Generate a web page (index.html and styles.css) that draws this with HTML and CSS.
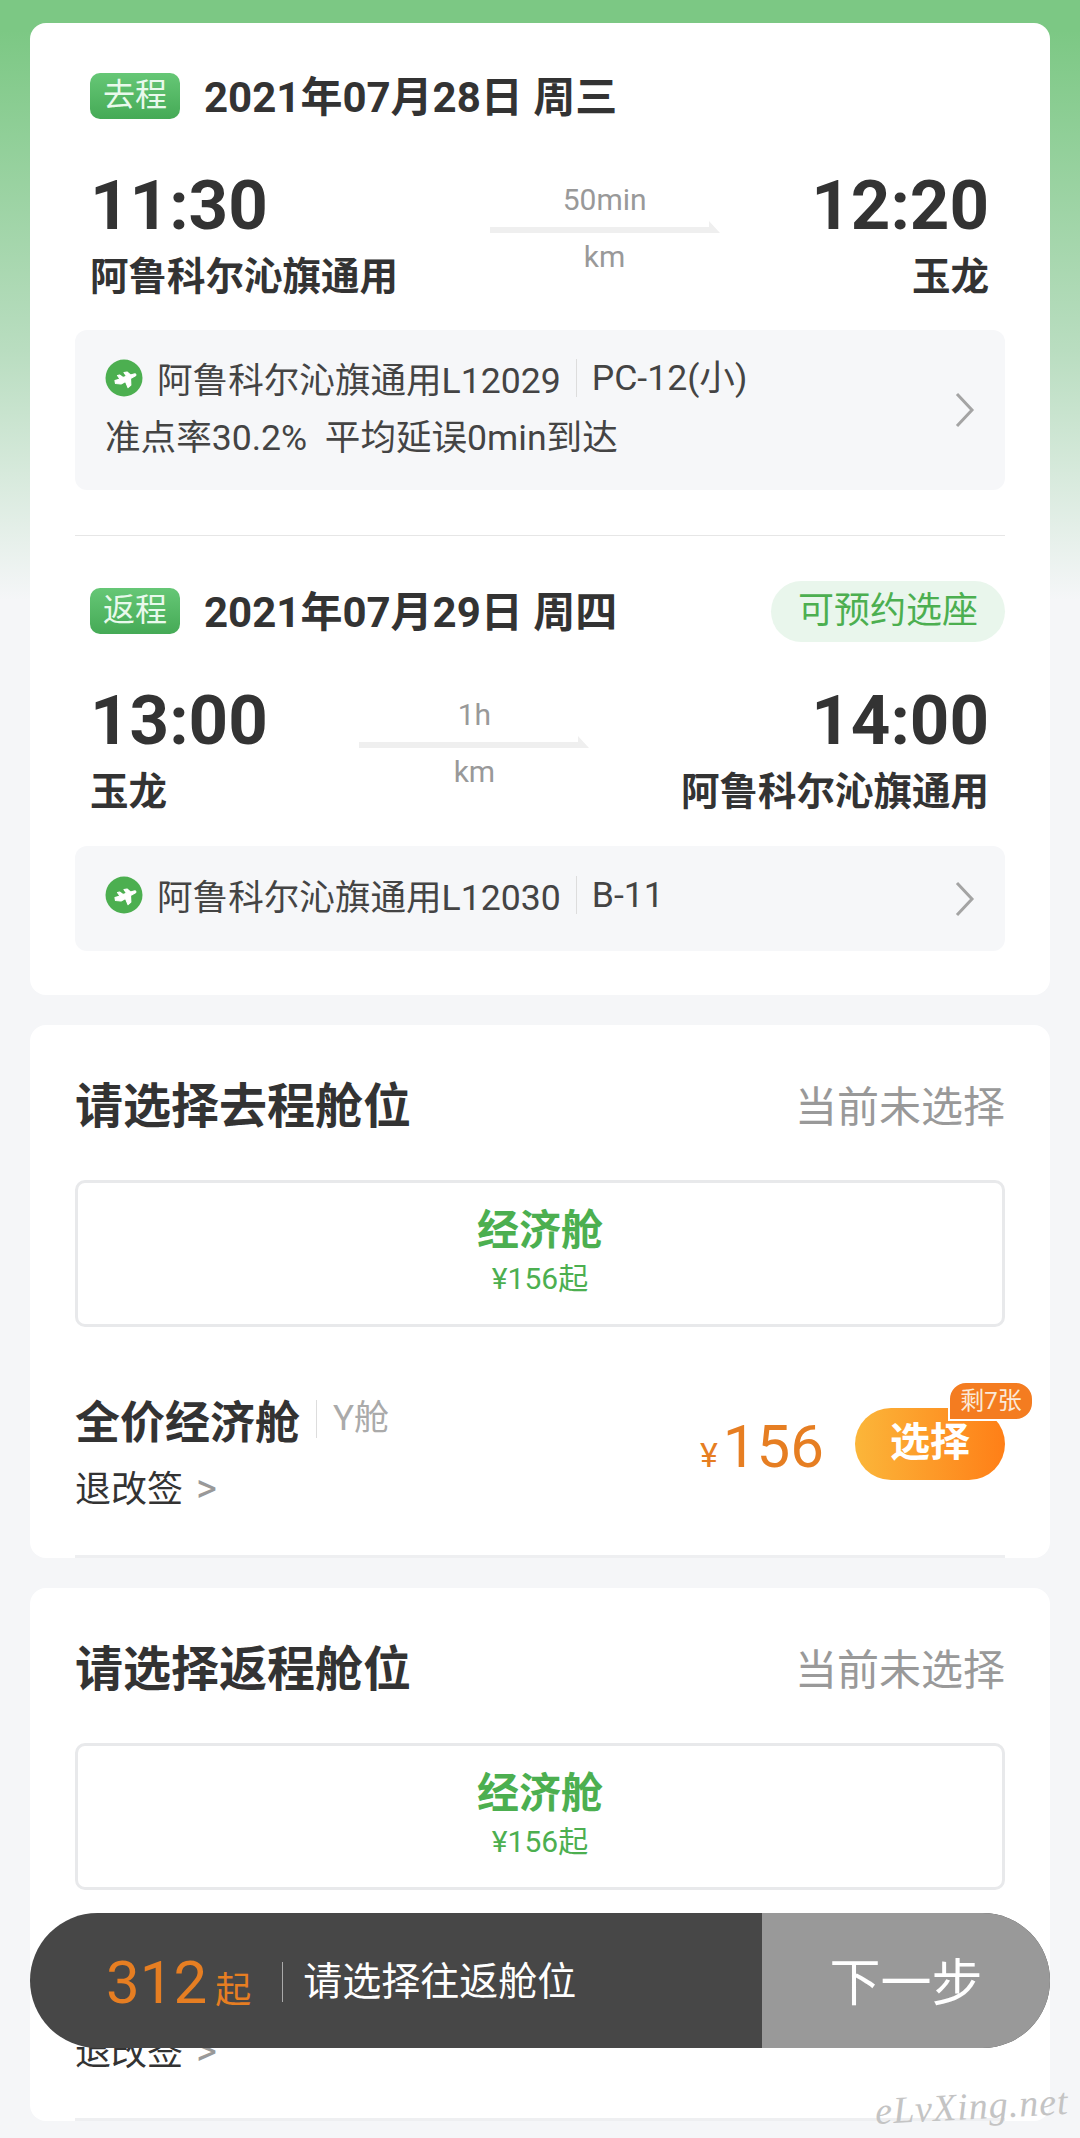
FILE: index.html
```html
<!DOCTYPE html>
<html lang="zh-CN">
<head>
  <meta charset="UTF-8" />
  <meta name="viewport" content="width=device-width, initial-scale=1.0"/>
  <title>选择舱位</title>
  <link rel="stylesheet" href="styles.css">
</head>
<body>
  <div class="page">
    <div class="card trip-card">
      <div class="trip-head">
        <span class="tag">去程</span>
        <span class="trip-date">2021年07月28日 周三</span>
      </div>
      <div class="trip-times">
        <div class="stop">
          <div class="time">11:30</div>
          <div class="station">阿鲁科尔沁旗通用</div>
        </div>
        <div class="route">
          <div class="route-text">50min</div>
          <svg class="route-arrow" width="230" height="12" viewBox="0 0 230 12"><polygon points="0,6 219,6 219,0 230,12 0,12" fill="#efefef"/></svg>
          <div class="route-text">km</div>
        </div>
        <div class="stop stop-right">
          <div class="time">12:20</div>
          <div class="station">玉龙</div>
        </div>
      </div>
      <div class="flight-box">
        <div class="flight-info">
          <div class="flight-line">
            <svg class="plane" width="38" height="38" viewBox="0 0 38 38"><circle cx="19" cy="19" r="18.500" fill="#4caf50"/><path d="M10 21.500L15 20 12.500 16.500 14.500 16 18 18.500 21.500 17.200 19 13.500 22 13 25.500 16 29 15C31 14.500 31.500 16 30 17L25.500 19.500 25.800 26 23 28.500 20.500 22.500 16 25 10.500 24.500z" fill="#fff" stroke="#fff" stroke-width="1.200" stroke-linejoin="round"/></svg>
            <span class="airline">阿鲁科尔沁旗通用L12029</span>
            <span class="plane-type">PC-12(小)</span>
          </div>
          <div class="flight-stat">准点率30.2%&nbsp; 平均延误0min到达</div>
        </div>
        <svg class="chevron" width="20" height="36" viewBox="0 0 20 36"><path d="M2 2l15 16L2 34" fill="none" stroke="#a4a4a4" stroke-width="3"/></svg>
      </div>

      <div class="trip-divider"></div>

      <div class="trip-head return-head">
        <span class="tag">返程</span>
        <span class="trip-date">2021年07月29日 周四</span>
        <span class="seat-pill">可预约选座</span>
      </div>
      <div class="trip-times return-times">
        <div class="stop">
          <div class="time">13:00</div>
          <div class="station">玉龙</div>
        </div>
        <div class="route">
          <div class="route-text">1h</div>
          <svg class="route-arrow" width="230" height="12" viewBox="0 0 230 12"><polygon points="0,6 219,6 219,0 230,12 0,12" fill="#efefef"/></svg>
          <div class="route-text">km</div>
        </div>
        <div class="stop stop-right">
          <div class="time">14:00</div>
          <div class="station">阿鲁科尔沁旗通用</div>
        </div>
      </div>
      <div class="flight-box flight-box-short">
        <div class="flight-info">
          <div class="flight-line">
            <svg class="plane" width="38" height="38" viewBox="0 0 38 38"><circle cx="19" cy="19" r="18.500" fill="#4caf50"/><path d="M10 21.500L15 20 12.500 16.500 14.500 16 18 18.500 21.500 17.200 19 13.500 22 13 25.500 16 29 15C31 14.500 31.500 16 30 17L25.500 19.500 25.800 26 23 28.500 20.500 22.500 16 25 10.500 24.500z" fill="#fff" stroke="#fff" stroke-width="1.200" stroke-linejoin="round"/></svg>
            <span class="airline">阿鲁科尔沁旗通用L12030</span>
            <span class="plane-type">B-11</span>
          </div>
        </div>
        <svg class="chevron" width="20" height="36" viewBox="0 0 20 36"><path d="M2 2l15 16L2 34" fill="none" stroke="#a4a4a4" stroke-width="3"/></svg>
      </div>
    </div>

    <div class="card cabin-card">
      <div class="cabin-head">
        <span class="cabin-title">请选择去程舱位</span>
        <span class="cabin-state">当前未选择</span>
      </div>
      <div class="cabin-box">
        <div class="cabin-name">经济舱</div>
        <div class="cabin-from">¥156起</div>
      </div>
      <div class="fare-row">
        <div class="fare-left">
          <div class="fare-title"><span class="fare-name">全价经济舱</span><span class="fare-code">Y舱</span></div>
          <div class="fare-rule">退改签 <span class="rule-arrow">&gt;</span></div>
        </div>
        <div class="fare-price"><span class="yen">¥</span>156</div>
        <div class="select-btn">选择<span class="left-badge">剩7张</span></div>
      </div>
    </div>

    <div class="card cabin-card">
      <div class="cabin-head">
        <span class="cabin-title">请选择返程舱位</span>
        <span class="cabin-state">当前未选择</span>
      </div>
      <div class="cabin-box">
        <div class="cabin-name">经济舱</div>
        <div class="cabin-from">¥156起</div>
      </div>
      <div class="fare-row">
        <div class="fare-left">
          <div class="fare-title"><span class="fare-name">全价经济舱</span><span class="fare-code">Y舱</span></div>
          <div class="fare-rule">退改签 <span class="rule-arrow">&gt;</span></div>
        </div>
      </div>
    </div>
  </div>

  <div class="bottom-bar">
    <div class="bar-left">
      <span class="bar-price">312</span>
      <span class="bar-from">起</span>
      <span class="bar-hint">请选择往返舱位</span>
    </div>
    <div class="bar-next">下一步</div>
  </div>

  <div class="watermark">eLvXing.net</div>
</body>
</html>
```

FILE: styles.css
```css
html, body {
  margin: 0;
  height: 2138px;
  overflow: hidden;
}

body {
  position: relative;
  font-family: Roboto, "Noto Sans CJK SC", sans-serif;
  color: #333;
  background: linear-gradient(to bottom, #7cc884 0, #7cc884 30px, #b9ddc0 350px, #f5f6f8 600px);
}

.page {
  padding: 23px 30px 0;
  display: flex;
  flex-direction: column;
  gap: 30px;
}

.card {
  background: #fff;
  border-radius: 16px;
  padding: 0 45px;
  box-sizing: border-box;
}

.trip-card {
  height: 972px;
  padding-top: 50px;
}

.trip-head {
  display: flex;
  align-items: center;
  height: 46px;
  padding-left: 15px;
}

.tag {
  width: 90px;
  height: 46px;
  line-height: 44px;
  text-align: center;
  border-radius: 10px;
  background: linear-gradient(to bottom, #66c776, #45aa56);
  color: #e9f9ec;
  font-size: 32px;
  margin-right: 24px;
}

.trip-date {
  font-size: 42px;
  font-weight: 700;
  margin-bottom: 5px;
}

.seat-pill {
  margin-left: auto;
  width: 234px;
  height: 61px;
  line-height: 60px;
  text-align: center;
  border-radius: 31px;
  background: #e9f6ec;
  color: #4caf50;
  font-size: 36px;
}

.trip-times {
  display: flex;
  align-items: flex-start;
  padding: 0 16px 0 15px;
  margin-top: 45px;
}

.stop {
  white-space: nowrap;
}

.stop-right {
  text-align: right;
}

.time {
  font-size: 69px;
  font-weight: 700;
  line-height: 84px;
}

.station {
  font-size: 38.500px;
  font-weight: 700;
  line-height: 52px;
  margin-top: 3px;
}

.route {
  flex: 1;
  display: flex;
  flex-direction: column;
  align-items: center;
  padding-top: 16px;
}

.route-text {
  font-size: 30px;
  line-height: 40px;
  color: #999;
}

.route-arrow {
  display: block;
  margin: 1px 0 4px;
}

.flight-box {
  display: flex;
  align-items: center;
  justify-content: space-between;
  height: 160px;
  margin-top: 27px;
  padding: 0 30px;
  box-sizing: border-box;
  background: #f6f7f9;
  border-radius: 12px;
}

.flight-box-short {
  height: 105px;
  margin-top: 28px;
}

.flight-box-short .flight-info {
  padding-bottom: 8px;
}

.flight-info {
  padding-bottom: 4px;
}

.flight-line {
  display: flex;
  align-items: center;
  height: 56px;
}

.plane {
  margin-right: 14px;
}

.airline,
.plane-type,
.flight-stat {
  font-size: 35.600px;
  color: #444;
}

.plane-type {
  margin-left: 15px;
  padding-left: 15px;
  border-left: 1px solid #ddd;
  line-height: 38px;
}

.flight-stat {
  line-height: 58px;
  margin-top: 3px;
}

.chevron {
  display: block;
}

.trip-divider {
  height: 1px;
  background: #e6e6e6;
  margin-top: 45px;
}

.return-head {
  margin-top: 45px;
  height: 60px;
}

.return-times {
  margin-top: 38px;
}

.cabin-card {
  height: 533px;
  padding-top: 50px;
  position: relative;
}

.cabin-card::after {
  content: "";
  position: absolute;
  left: 45px;
  right: 45px;
  bottom: 0;
  height: 3px;
  background: #eeeff1;
}

.cabin-head {
  display: flex;
  align-items: center;
  justify-content: space-between;
  height: 56px;
}

.cabin-title {
  font-size: 48px;
  font-weight: 700;
  margin-bottom: 2px;
}

.cabin-state {
  font-size: 42px;
  color: #999;
}

.cabin-box {
  height: 147px;
  margin-top: 49px;
  box-sizing: border-box;
  border: 3px solid #e8e9eb;
  border-radius: 10px;
  text-align: center;
  padding-top: 20px;
}

.cabin-name {
  font-size: 42px;
  font-weight: 700;
  line-height: 56px;
  margin-bottom: 2px;
  color: #4caf50;
}

.cabin-from {
  font-size: 30px;
  line-height: 36px;
  color: #4caf50;
}

.fare-row {
  display: flex;
  align-items: flex-start;
  margin-top: 64px;
}

.fare-left {
  flex: 1;
}

.fare-title {
  display: flex;
  align-items: center;
  height: 56px;
}

.fare-name {
  font-size: 45px;
  font-weight: 700;
}

.fare-code {
  font-size: 35px;
  color: #aaa;
  margin-left: 16px;
  padding-left: 16px;
  border-left: 1px solid #ddd;
  line-height: 38px;
}

.fare-rule {
  font-size: 36px;
  line-height: 48px;
  margin-top: 18px;
}

.rule-arrow {
  font-size: 40px;
  color: #999;
  margin-left: 4px;
}

.fare-price {
  font-size: 60px;
  line-height: 70px;
  color: #e67e22;
  margin-right: 31px;
  margin-top: 21px;
}

.yen {
  font-size: 34px;
  margin-right: 5px;
}

.select-btn {
  position: relative;
  width: 150px;
  height: 72px;
  line-height: 70px;
  margin-top: 17px;
  text-align: center;
  border-radius: 36px;
  background: linear-gradient(to right, #fbb63a, #ff7f17);
  color: #fff;
  font-size: 40px;
  font-weight: 700;
}

.left-badge {
  position: absolute;
  right: -29px;
  top: -27px;
  width: 86px;
  height: 40px;
  box-sizing: border-box;
  line-height: 36px;
  border: 2px solid #fff;
  border-radius: 18px 18px 18px 0;
  background: #f47c20;
  color: #fbe9d7;
  font-size: 24px;
  font-weight: 400;
}

.bottom-bar {
  position: absolute;
  left: 30px;
  top: 1913px;
  width: 1020px;
  height: 135px;
  display: flex;
  border-radius: 68px;
  overflow: hidden;
  background: #474747;
}

.bar-left {
  flex: 1;
  display: flex;
  align-items: center;
  padding-left: 76px;
}

.bar-price {
  font-size: 60px;
  color: #e67e22;
  margin-top: 4px;
}

.bar-from {
  font-size: 36px;
  color: #e67e22;
  margin: 12px 0 0 8px;
}

.bar-hint {
  font-size: 39px;
  color: #fff;
  margin: 2px 0 0 31px;
  padding-left: 20px;
  border-left: 1px solid #aaa;
  line-height: 40px;
}

.bar-next {
  width: 288px;
  text-align: center;
  background: #999;
  color: #fff;
  font-size: 51px;
  line-height: 141px;
}

.watermark {
  position: absolute;
  left: 875px;
  top: 2084px;
  font-family: "Liberation Serif", serif;
  font-style: italic;
  font-size: 38px;
  letter-spacing: 1px;
  color: #c4c4c4;
  transform: rotate(-3deg);
}
```
